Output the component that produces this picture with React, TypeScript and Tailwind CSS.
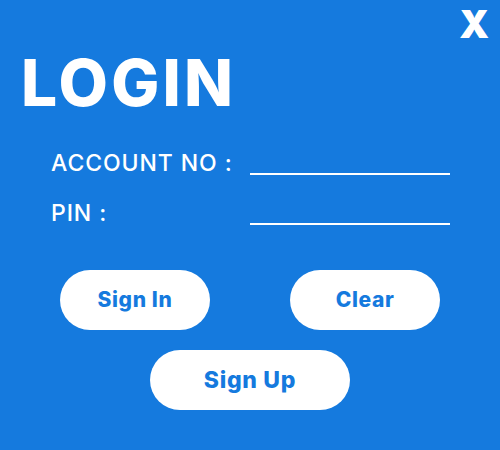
import React from 'react';

const App: React.FC = () => {
  return (
    <div
      className="w-[500px] h-[450px] bg-[#157ade] text-white flex flex-col overflow-hidden"
      style={{ fontFamily: 'Inter, "Open Sans", sans-serif' }}
    >
      {/* close */}
      <div className="flex justify-end pr-[11px] pt-[4px] h-[44px]">
        <button className="text-[38px] font-black leading-none">X</button>
      </div>

      <h1 className="pl-[21px] mt-[7px] text-[64px] font-extrabold leading-none tracking-[0.05em]">LOGIN</h1>

      {/* fields */}
      <div className="mt-[37px] pl-[51px] flex flex-col gap-[27px]">
        <div className="flex items-end">
          <label className="w-[199px] text-[23px] font-medium leading-none tracking-[0.04em]">ACCOUNT NO :</label>
          <div className="w-[200px] h-[2px] bg-white" />
        </div>
        <div className="flex items-end">
          <label className="w-[199px] text-[23px] font-medium leading-none tracking-[0.04em]">PIN :</label>
          <div className="w-[200px] h-[2px] bg-white" />
        </div>
      </div>

      {/* actions */}
      <div className="mt-[45px] flex justify-center gap-[80px]">
        <button className="w-[150px] h-[60px] rounded-full bg-white text-[#157ade] text-[21px] font-extrabold tracking-[0.03em]">Sign In</button>
        <button className="w-[150px] h-[60px] rounded-full bg-white text-[#157ade] text-[21px] font-extrabold tracking-[0.03em]">Clear</button>
      </div>
      <div className="mt-[20px] flex justify-center">
        <button className="w-[200px] h-[60px] rounded-full bg-white text-[#157ade] text-[23px] font-extrabold tracking-[0.03em]">Sign Up</button>
      </div>
    </div>
  );
};

export default App;
